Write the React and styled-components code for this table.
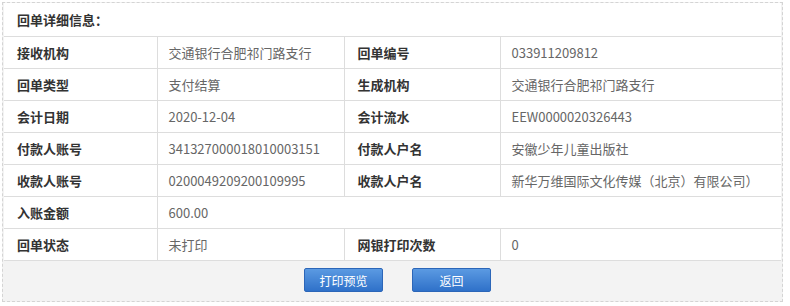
import React from "react";
import styled, { createGlobalStyle } from "styled-components";

const GlobalStyle = createGlobalStyle`
  body {
    margin: 0;
    background: #ffffff;
    font-family: "Microsoft YaHei", "Noto Sans CJK SC", "Noto Sans", sans-serif;
  }
`;

const rows = [
  ["接收机构", "交通银行合肥祁门路支行", "回单编号", "033911209812"],
  ["回单类型", "支付结算", "生成机构", "交通银行合肥祁门路支行"],
  ["会计日期", "2020-12-04", "会计流水", "EEW0000020326443"],
  ["付款人账号", "341327000018010003151", "付款人户名", "安徽少年儿童出版社"],
  ["收款人账号", "0200049209200109995", "收款人户名", "新华万维国际文化传媒（北京）有限公司）"],
  ["入账金额", "600.00"],
  ["回单状态", "未打印", "网银打印次数", "0"],
];

export default function App() {
  return (
    <>
      <GlobalStyle />
      <Panel>
        <Title>回单详细信息：</Title>
        <Table>
          <colgroup>
            <col style={{ width: 153 }} />
            <col style={{ width: 187 }} />
            <col style={{ width: 156 }} />
            <col />
          </colgroup>
          <tbody>
            {rows.map((r, i) => (
              <tr key={i}>
                <Label>{r[0]}</Label>
                {r.length === 2 ? (
                  <Value colSpan={3}>{r[1]}</Value>
                ) : (
                  <>
                    <Value>{r[1]}</Value>
                    <Label>{r[2]}</Label>
                    <Value>{r[3]}</Value>
                  </>
                )}
              </tr>
            ))}
          </tbody>
        </Table>
        <ButtonBar>
          <Button>打印预览</Button>
          <Button>返回</Button>
        </ButtonBar>
      </Panel>
    </>
  );
}

const Panel = styled.div`
  margin: 2px 0 0 2px;
  width: 781px;
  border: 1px dashed #d4d4d4;
  background: #f3f3f3;
  box-sizing: border-box;
  padding: 0 1px;
`;

const Title = styled.div`
  height: 33px;
  display: flex;
  align-items: center;
  padding-left: 13px;
  background: #ffffff;
  font-size: 13px;
  font-weight: 700;
  color: #333333;
  border-bottom: 1px solid #dddddd;
`;

const Table = styled.table`
  width: 100%;
  border-collapse: collapse;
  table-layout: fixed;
  background: #ffffff;
  font-size: 13px;

  td {
    height: 31px;
    border: 1px solid #dddddd;
    border-top: none;
    white-space: nowrap;
  }
  td:first-child {
    border-left: none;
  }
  td:last-child {
    border-right: none;
  }
`;

const Label = styled.td`
  padding: 0 0 0 13px;
  font-weight: 700;
  color: #333333;
`;

const Value = styled.td`
  padding: 0 0 0 11px;
  color: #666666;
`;

const ButtonBar = styled.div`
  height: 40px;
  display: flex;
  align-items: center;
  justify-content: center;
  gap: 29px;
  padding: 0 0 2px 10px;
  box-sizing: border-box;
`;

const Button = styled.button`
  width: 79px;
  height: 24px;
  border: 1px solid #2c66b8;
  border-radius: 2px;
  background: linear-gradient(#5b9ae2, #2f71c9);
  color: #ffffff;
  font-family: inherit;
  font-size: 12px;
  padding: 0;
  cursor: pointer;
`;
